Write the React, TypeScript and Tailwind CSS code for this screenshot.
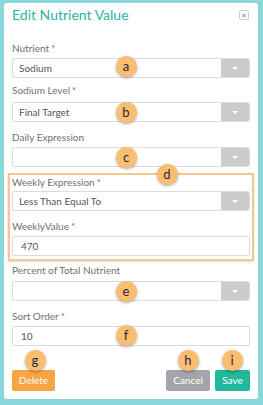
import React from 'react';

const Req = () => <span className="text-[#e0493f] ml-[2px]">*</span>;

const Label = ({ text, required, className = '' }: { text: string; required?: boolean; className?: string }) => (
  <div className={`text-[10px] leading-[12px] text-[#707070] ${className}`}>
    {text}
    {required && <Req />}
  </div>
);

const Select = ({ value, className = '' }: { value?: string; className?: string }) => (
  <div className={`flex h-[20px] rounded-[2px] border border-[#dcdcdc] bg-white ${className}`}>
    <div className="flex flex-1 items-center pl-[6px] text-[10px] text-[#555]">{value}</div>
    <div className="flex w-[28px] items-center justify-center rounded-r-[2px] bg-[#cbcbcb]">
      <div className="h-0 w-0 border-x-[3px] border-t-[3px] border-x-transparent border-t-white" />
    </div>
  </div>
);

const Input = ({ value, className = '' }: { value: string; className?: string }) => (
  <div className={`flex h-[20px] items-center rounded-[2px] border border-[#dcdcdc] bg-white pl-[8px] text-[10px] text-[#555] ${className}`}>
    {value}
  </div>
);

// callout markers laid over the form
const Badge = ({ letter, x, y }: { letter: string; x: number; y: number }) => (
  <div
    className="absolute flex h-[21px] w-[21px] items-center justify-center rounded-full bg-[#fbbd70] text-[13px] leading-none text-[#1f2a48] shadow-[0_1px_3px_rgba(0,0,0,0.35)]"
    style={{ left: x - 10.5, top: y - 10.5 }}
  >
    {letter}
  </div>
);

export default function App() {
  return (
    <div className="relative h-[405px] w-[263px] bg-[#8ad8dc] pl-[4px] pt-[3px]" style={{ fontFamily: 'Lato, "Open Sans", sans-serif' }}>
      <div className="h-[396px] w-[254px] rounded-[3px] bg-white px-[8px] pt-[2px]">
        <div className="flex items-center justify-between">
          <h1 className="text-[14px] leading-[20px] text-[#2bb4a3]">Edit Nutrient Value</h1>
          <div className="mr-[1px] flex h-[10px] w-[10px] items-center justify-center rounded-[2px] border border-[#cfcfcf] text-[7px] leading-none text-[#2aa7e0]">
            ✕
          </div>
        </div>

        <Label text="Nutrient" required className="mt-[17px]" />
        <Select value="Sodium" className="mt-[4px]" />

        <Label text="Sodium Level" required className="mt-[6px]" />
        <Select value="Final Target" className="mt-[6px]" />

        <Label text="Daily Expression" className="mt-[9px]" />
        <Select className="mt-[4px]" />

        <div className="-mx-[4px] mt-[6px] border-2 border-[#f6c68e] px-[2px] pb-[3px] pt-[1px] shadow-[0_1px_2px_rgba(0,0,0,0.15)]">
          <Label text="Weekly Expression" required />
          <Select value="Less Than Equal To" className="mt-[3px]" />
          <Label text="WeeklyValue" required className="mt-[9px]" />
          <Input value="470" className="mt-[4px]" />
        </div>

        <Label text="Percent of Total Nutrient" className="mt-[3px]" />
        <Select className="mt-[5px]" />

        <Label text="Sort Order" required className="mt-[9px]" />
        <Input value="10" className="mt-[4px]" />

        <div className="mt-[24px] flex items-center">
          <button className="h-[21px] w-[43px] rounded-[2px] bg-[#f7a545] text-[10px] text-white">Delete</button>
          <div className="flex-1" />
          <button className="h-[21px] w-[44px] rounded-[2px] bg-[#a2a6aa] text-[10px] text-white">Cancel</button>
          <button className="ml-[5px] h-[21px] w-[35px] rounded-[2px] bg-[#22b89b] text-[10px] text-white">Save</button>
        </div>
      </div>

      <Badge letter="a" x={126} y={66} />
      <Badge letter="b" x={126} y={112} />
      <Badge letter="c" x={126} y={157} />
      <Badge letter="d" x={167} y={174} />
      <Badge letter="e" x={126} y={291} />
      <Badge letter="f" x={126} y={335} />
      <Badge letter="g" x={35} y={360} />
      <Badge letter="h" x={188} y={360} />
      <Badge letter="i" x={232} y={360} />
    </div>
  );
}
